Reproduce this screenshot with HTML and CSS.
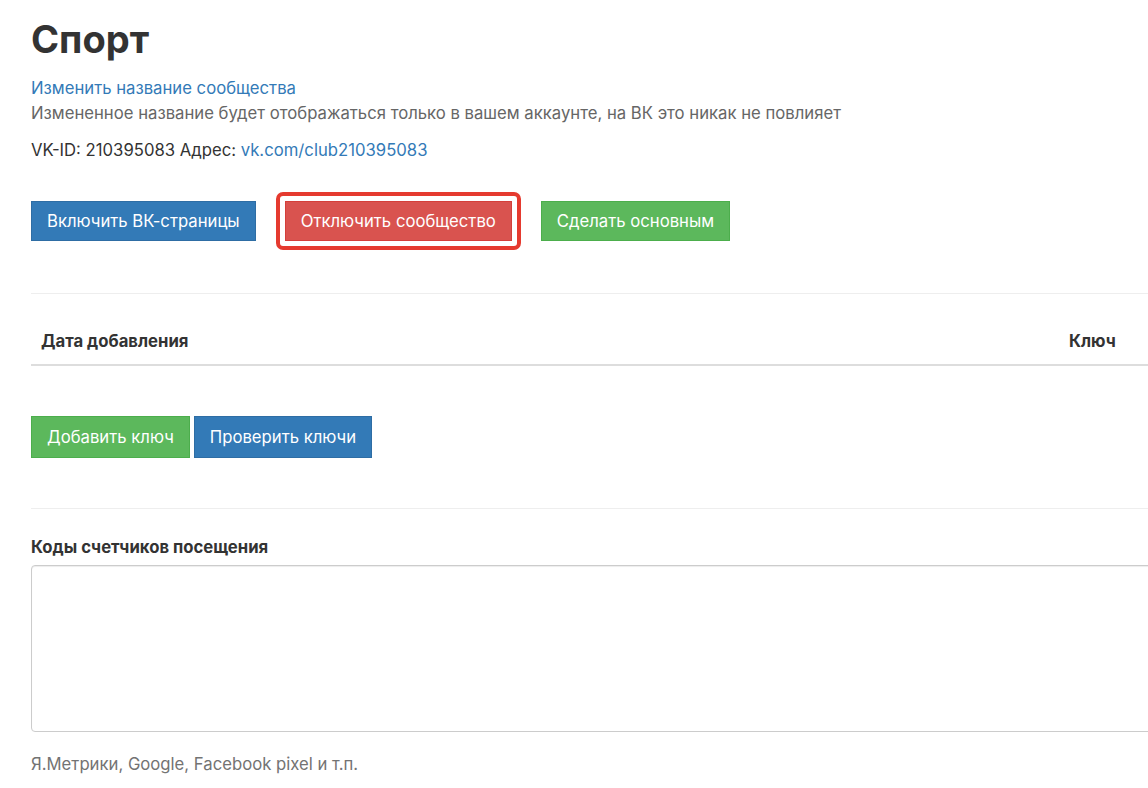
FILE: index.html
```html
<!DOCTYPE html>
<html lang="ru">
  <head>
    <meta charset="UTF-8" />
    <meta name="viewport" content="width=device-width, initial-scale=1.0" />
    <title>Спорт</title>
    <link rel="stylesheet" href="styles.css">
  </head>
  <body>
    <div class="content">
      <h1>Спорт</h1>

      <p class="rename">
        <a href="#">Изменить название сообщества</a><br />
        <span class="muted">Измененное название будет отображаться только в вашем аккаунте, на ВК это никак не повлияет</span>
      </p>

      <p class="vk-info">
        VK-ID: 210395083 Адрес: <a href="#">vk.com/club210395083</a>
      </p>

      <div class="actions">
        <button class="btn btn-primary">Включить ВК-страницы</button>
        <button class="btn btn-danger marked">Отключить сообщество</button>
        <button class="btn btn-success">Сделать основным</button>
      </div>

      <hr />

      <table class="keys">
        <thead>
          <tr>
            <th class="col-date">Дата добавления</th>
            <th>Ключ</th>
          </tr>
        </thead>
        <tbody></tbody>
      </table>

      <div class="actions actions-tight">
        <button class="btn btn-success btn-tall">Добавить ключ</button>
        <button class="btn btn-primary btn-tall">Проверить ключи</button>
      </div>

      <hr class="hr-after" />

      <div class="form-group">
        <label for="counters">Коды счетчиков посещения</label>
        <textarea id="counters"></textarea>
        <p class="help">Я.Метрики, Google, Facebook pixel и т.п.</p>
      </div>
    </div>
  </body>
</html>
```

FILE: styles.css
```css
html,
body {
  margin: 0;
  padding: 0;
  background: #fff;
  overflow: hidden;
}

body {
  font-family: Inter, "Noto Sans", sans-serif;
  font-size: 16.7px;
  line-height: 25px;
  color: #333;
}

a {
  color: #337ab7;
  text-decoration: none;
}

.content {
  width: 1200px;
  padding-left: 31px;
}

h1 {
  margin: 17px 0 0;
  font-size: 38px;
  line-height: 44px;
  font-weight: 700;
  color: #333;
}

.rename {
  margin: 15px 0 0;
}

.muted {
  color: #666;
}

.vk-info {
  margin: 12px 0 0;
}

.actions {
  display: flex;
  gap: 29px;
  margin-top: 38px;
}

.actions-tight {
  gap: 4px;
  margin-top: 50px;
}

.btn {
  height: 40px;
  padding: 0 15px;
  border: 1px solid transparent;
  border-radius: 0;
  font-family: inherit;
  font-size: 16.7px;
  color: #fff;
  cursor: pointer;
}

.btn-tall {
  height: 42px;
}

.btn-primary {
  background: #337ab7;
  border-color: #2e6da4;
}

.btn-danger {
  background: #d9534f;
  border-color: #d43f3a;
}

.btn-success {
  background: #5cb85c;
  border-color: #4cae4c;
}

/* рамка-выделение вокруг кнопки */
.marked {
  position: relative;
}

.marked::after {
  content: "";
  position: absolute;
  top: -10px;
  left: -10px;
  right: -10px;
  bottom: -10px;
  border: 4px solid #e53a2f;
  border-radius: 7px;
}

hr {
  margin: 52px 0 0;
  border: 0;
  border-top: 1px solid #eee;
}

.hr-after {
  margin-top: 50px;
}

.keys {
  width: 100%;
  margin-top: 27px;
  border-collapse: collapse;
}

.keys th {
  padding: 8px 10px 10px;
  text-align: left;
  font-weight: 700;
  border-bottom: 2px solid #ddd;
}

.keys .col-date {
  width: 1008px;
}

.form-group {
  margin-top: 26px;
}

.form-group label {
  display: block;
  font-weight: 700;
  margin-bottom: 5px;
}

textarea {
  display: block;
  box-sizing: border-box;
  width: 100%;
  height: 167px;
  border: 1px solid #ccc;
  border-radius: 4px;
  box-shadow: inset 0 1px 1px rgba(0, 0, 0, 0.075);
  resize: none;
}

.help {
  margin: 20px 0 0;
  color: #737373;
}
```
